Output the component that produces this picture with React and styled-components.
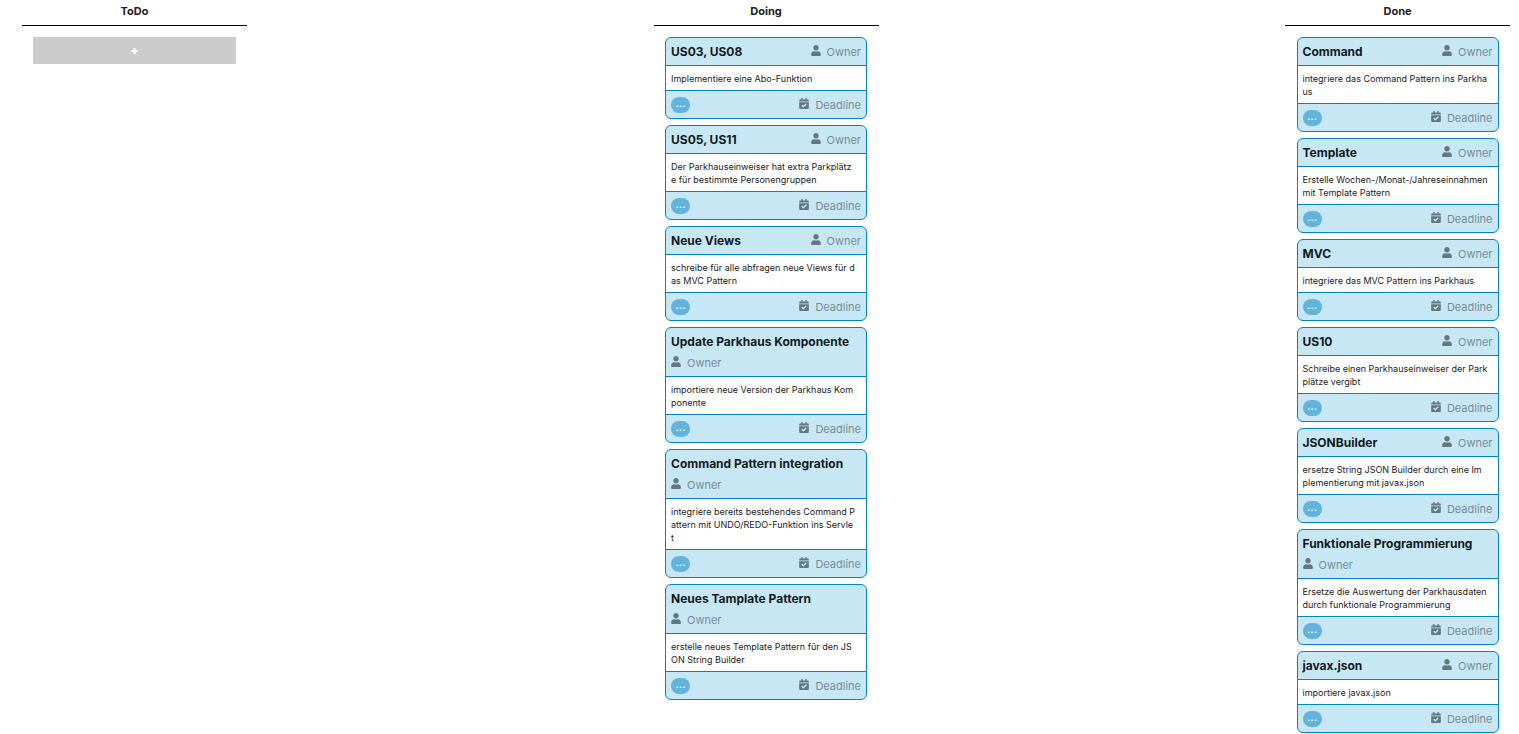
import React from "react";
import styled, { createGlobalStyle } from "styled-components";
import { FaUser, FaCalendarCheck } from "react-icons/fa";

const GlobalStyle = createGlobalStyle`
  *, *::before, *::after { box-sizing: border-box; }
  body {
    margin: 0;
    background: #fff;
    color: #212121;
    font-family: Inter, "Liberation Sans", sans-serif;
  }
`;

const Board = styled.main`
  display: flex;
  justify-content: space-between;
  align-items: flex-start;
  padding: 0 9px 0 22px;
`;

const Column = styled.section`
  width: 225px;
  display: flex;
  flex-direction: column;
  align-items: center;
`;

const ColumnTitle = styled.h2`
  align-self: stretch;
  margin: 0 0 11px;
  padding: 3px 0 6px;
  border-bottom: 1px solid #000;
  font-size: 11px;
  line-height: 16px;
  font-weight: 700;
  text-align: center;
`;

const AddButton = styled.button`
  width: 90%;
  height: 27px;
  padding: 0;
  border: 0;
  background: #ccc;
  color: #fff;
  font: 900 12px/27px Inter, "Liberation Sans", sans-serif;
  cursor: pointer;
`;

const CardList = styled.ul`
  width: 202px;
  margin: 0;
  padding: 0;
  list-style: none;
  display: flex;
  flex-direction: column;
  gap: 6px;
`;

const Card = styled.li`
  border: 1px solid #0284c0;
  border-radius: 6px;
  overflow: hidden;
  background: #c8e7f4;
`;

const CardHeader = styled.header`
  display: flex;
  flex-wrap: wrap;
  justify-content: space-between;
  padding: 3px 5px;
`;

const CardTitle = styled.h3`
  margin: 0;
  padding-top: 1px;
  font-size: 12px;
  line-height: 20px;
  font-weight: 700;
  color: #111a1d;
`;

const Meta = styled.span`
  display: flex;
  align-items: center;
  gap: 6px;
  padding-top: 2px;
  font-size: 11px;
  line-height: 19px;
  color: #758c96;

  svg {
    width: 10px;
    height: 11px;
    margin-bottom: 4px;
    color: #62777f;
  }
`;

const CardText = styled.p`
  margin: 0;
  padding: 6px 5px 5px;
  border: solid #0284c0;
  border-width: 1px 0;
  background: #fff;
  font-size: 9px;
  line-height: 13px;
  white-space: pre-line;
`;

const CardFooter = styled.footer`
  display: flex;
  justify-content: space-between;
  align-items: center;
  padding: 3px 5px;
`;

const MoreButton = styled.button`
  width: 19px;
  height: 16px;
  padding: 0 0 3px;
  border: 0;
  border-radius: 8px;
  background: #62b4dc;
  color: #fff;
  font: 500 11px/13px Inter, "Liberation Sans", sans-serif;
  cursor: pointer;
`;

const doing = [
  ["US03, US08", "Implementiere eine Abo-Funktion"],
  ["US05, US11", "Der Parkhauseinweiser hat extra Parkplätz\ne für bestimmte Personengruppen"],
  ["Neue Views", "schreibe für alle abfragen neue Views für d\nas MVC Pattern"],
  ["Update Parkhaus Komponente", "importiere neue Version der Parkhaus Kom\nponente"],
  ["Command Pattern integration", "integriere bereits bestehendes Command P\nattern mit UNDO/REDO-Funktion ins Servle\nt"],
  ["Neues Tamplate Pattern", "erstelle neues Template Pattern für den JS\nON String Builder"],
];

const done = [
  ["Command", "integriere das Command Pattern ins Parkha\nus"],
  ["Template", "Erstelle Wochen-/Monat-/Jahreseinnahmen\nmit Template Pattern"],
  ["MVC", "integriere das MVC Pattern ins Parkhaus"],
  ["US10", "Schreibe einen Parkhauseinweiser der Park\nplätze vergibt"],
  ["JSONBuilder", "ersetze String JSON Builder durch eine Im\nplementierung mit javax.json"],
  ["Funktionale Programmierung", "Ersetze die Auswertung der Parkhausdaten\ndurch funktionale Programmierung"],
  ["javax.json", "importiere javax.json"],
];

function Task({ title, text }) {
  return (
    <Card>
      <CardHeader>
        <CardTitle>{title}</CardTitle>
        <Meta><FaUser aria-hidden="true" />Owner</Meta>
      </CardHeader>
      <CardText>{text}</CardText>
      <CardFooter>
        <MoreButton type="button">...</MoreButton>
        <Meta><FaCalendarCheck aria-hidden="true" />Deadline</Meta>
      </CardFooter>
    </Card>
  );
}

function TaskColumn({ title, tasks }) {
  return (
    <Column>
      <ColumnTitle>{title}</ColumnTitle>
      <CardList>
        {tasks.map(([name, text]) => <Task key={name} title={name} text={text} />)}
      </CardList>
    </Column>
  );
}

export default function App() {
  return (
    <>
      <GlobalStyle />
      <Board>
        <Column>
          <ColumnTitle>ToDo</ColumnTitle>
          <AddButton type="button">+</AddButton>
        </Column>
        <TaskColumn title="Doing" tasks={doing} />
        <TaskColumn title="Done" tasks={done} />
      </Board>
    </>
  );
}
